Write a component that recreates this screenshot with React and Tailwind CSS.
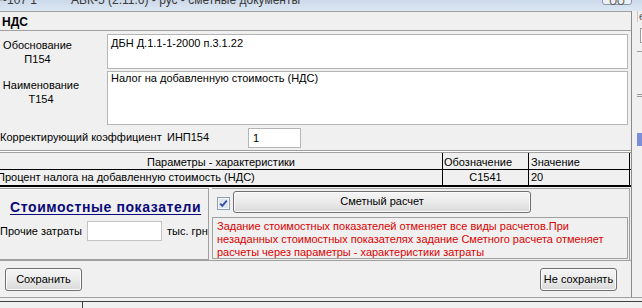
const Btn = ({ children, className = "" }) => (
  <button
    className={`rounded-[3px] border border-[#707070] bg-linear-to-b from-[#f5f5f5] via-[#ebebeb] to-[#d9d9d9] shadow-[inset_0_0_0_1px_#fbfbfb] text-[11px] leading-[13px] text-black ${className}`}
  >
    {children}
  </button>
);

const Checkbox = () => (
  <svg width="13" height="13" viewBox="0 0 13 13" className="shrink-0">
    <rect x="0.5" y="0.5" width="12" height="12" fill="#f4f6f9" stroke="#8e9fb4" />
    <rect x="2" y="2" width="9" height="9" fill="#dfe5ee" />
    <path d="M3.2 6.6 L5.3 8.8 L9.8 3.6" fill="none" stroke="#2c4fa8" strokeWidth="1.8" />
  </svg>
);

export default function App() {
  return (
    <div className="w-[642px] h-[308px] overflow-hidden bg-[#f0f0f0] flex flex-col text-[11px] leading-[13px] text-black font-['Liberation_Sans',Arial,sans-serif]">
      {/* window title, cut off at the top */}
      <div className="relative h-[11px] shrink-0 overflow-hidden bg-linear-to-b from-[#cbd9ea] to-[#dde7f2]">
        <div className="-mt-[7px] flex text-[12px] leading-[14px] text-[#3a3a3a]">
          <span className="w-[71px]">~107 1</span>
          <span>АВК-5 (2.11.6) - рус - сметные документы</span>
        </div>
        <div className="absolute left-[602px] top-[-7px] w-[30px] h-[12px] rounded-[3px] border border-[#8b97a8] bg-[#edf1f6] text-center text-[10px] leading-[16px] text-[#555]">
          ОО
        </div>
      </div>

      <div className="flex flex-1 min-h-0">
        {/* dialog */}
        <div className="w-[632px] shrink-0 border-r border-[#8a8a8a] flex flex-col">
          <div className="h-[20px] shrink-0 border-t border-b border-[#a0a0a0] pl-[2px] pt-[3px] text-[12px] font-bold leading-[14px]">
            НДС
          </div>

          <div className="flex mt-[3px] h-[35px]">
            <div className="w-[75px] pt-[4px] text-center leading-[14px]">
              <div>Обоснование</div>
              <div>П154</div>
            </div>
            <div className="ml-[32px] w-[521px] border border-[#b5b5b5] bg-white pl-[3px] pt-[2px]">
              ДБН Д.1.1-1-2000 п.3.1.22
            </div>
          </div>

          <div className="flex mt-[2px] h-[54px]">
            <div className="w-[82px] pt-[7px] text-center leading-[14px]">
              <div>Наименование</div>
              <div>Т154</div>
            </div>
            <div className="ml-[25px] w-[521px] border border-[#b5b5b5] bg-white pl-[3px]">
              Налог на добавленную стоимость (НДС)
            </div>
          </div>

          <div className="flex items-center mt-[2px] h-[21px]">
            <span className="w-[167px]">Корректирующий коэффициент</span>
            <span className="w-[81px]">ИНП154</span>
            <div className="w-[53px] h-[20px] border border-[#b5b5b5] bg-white pl-[4px] leading-[18px]">1</div>
          </div>

          <div className="mt-[2px] h-[3px] border-t border-b border-[#a0a0a0] bg-white" />

          {/* parameters table */}
          <div className="flex h-[17px] border-b border-black">
            <div className="w-[443px] border-r border-black text-center leading-[16px] pt-[1px]">Параметры - характеристики</div>
            <div className="w-[86px] border-r border-black pl-[1px] leading-[16px] pt-[1px]">Обозначение</div>
            <div className="w-[101px] border-r border-black pl-[2px] leading-[16px] pt-[1px]">Значение</div>
          </div>
          <div className="flex h-[17px] border-b-2 border-black">
            <div className="w-[443px] border-r border-black overflow-hidden whitespace-nowrap leading-[15px]">
              <span className="-ml-[3px] inline-block">Процент налога на добавленную стоимость (НДС)</span>
            </div>
            <div className="w-[86px] border-r border-black text-center leading-[15px]">С1541</div>
            <div className="w-[101px] border-r border-black pl-[2px] leading-[15px]">20</div>
          </div>

          {/* cost indicators */}
          <div className="flex mt-[1px] h-[72px]">
            <div className="w-[209px] border border-l-0 border-[#a0a0a0] shadow-[inset_0_1px_0_#fff] flex flex-col">
              <div className="pl-[10px] pt-[10px] text-[14px] leading-[16px] font-bold tracking-[0.6px] text-[#0a0a7a] underline underline-offset-[2px] decoration-[1px]">
                Стоимостные показатели
              </div>
              <div className="flex items-center mt-[6px]">
                <span className="w-[87px]">Прочие затраты</span>
                <div className="w-[75px] h-[20px] border border-[#c4c4c4] bg-white" />
                <span className="ml-[5px]">тыс. грн</span>
              </div>
            </div>
            <div className="ml-[3px] w-[418px] border-t border-r border-[#a0a0a0] flex flex-col">
              <div className="flex items-center h-[28px] pl-[5px]">
                <Checkbox />
                <Btn className="ml-[3px] w-[298px] h-[22px] -mt-[3px]">Сметный расчет</Btn>
              </div>
              <div className="w-[416px] h-[42px] border border-[#a0a0a0] pl-[4px] pt-[2px] text-[#dc0000] leading-[13px] whitespace-nowrap">
                Задание стоимостных показателей отменяет все виды расчетов.При
                <br />
                незаданных стоимостных показателях задание Сметного расчета отменяет
                <br />
                расчеты через параметры - характеристики затраты
              </div>
            </div>
          </div>

          {/* buttons */}
          <div className="flex items-start justify-between h-[37px] border-t border-[#a0a0a0] pt-[7px] pl-[5px] pr-[14px]">
            <Btn className="w-[77px] h-[23px]">Сохранить</Btn>
            <Btn className="w-[77px] h-[23px]">Не сохранять</Btn>
          </div>
        </div>

        {/* neighbouring window edge */}
        <div className="flex-1 flex flex-col">
          <div className="h-[11px] border-l border-[#c8c8c8] ml-[5px] overflow-hidden text-[11px] leading-[11px] text-[#555] pl-[1px]">е</div>
          <div className="ml-[8px] mt-[6px] h-[15px] border border-r-0 border-[#9a9a9a] bg-white" />
          <div className="mt-[8px] h-[1px] ml-[5px] bg-[#a0a0a0]" />
          <div className="mt-[42px] h-[3px] ml-[5px] border-t border-b border-[#9a9a9a]" />
          <div className="mt-[36px] h-[13px] ml-[5px] bg-[#7d8fd8]" />
        </div>
      </div>

      {/* grid of the window below */}
      <div className="h-[11px] shrink-0 border-t border-[#a0a0a0] pt-[3px]">
        <div className="h-full border-t border-[#404040] flex">
          <div className="w-[83px] border-r border-[#404040]" />
        </div>
      </div>
    </div>
  );
}
